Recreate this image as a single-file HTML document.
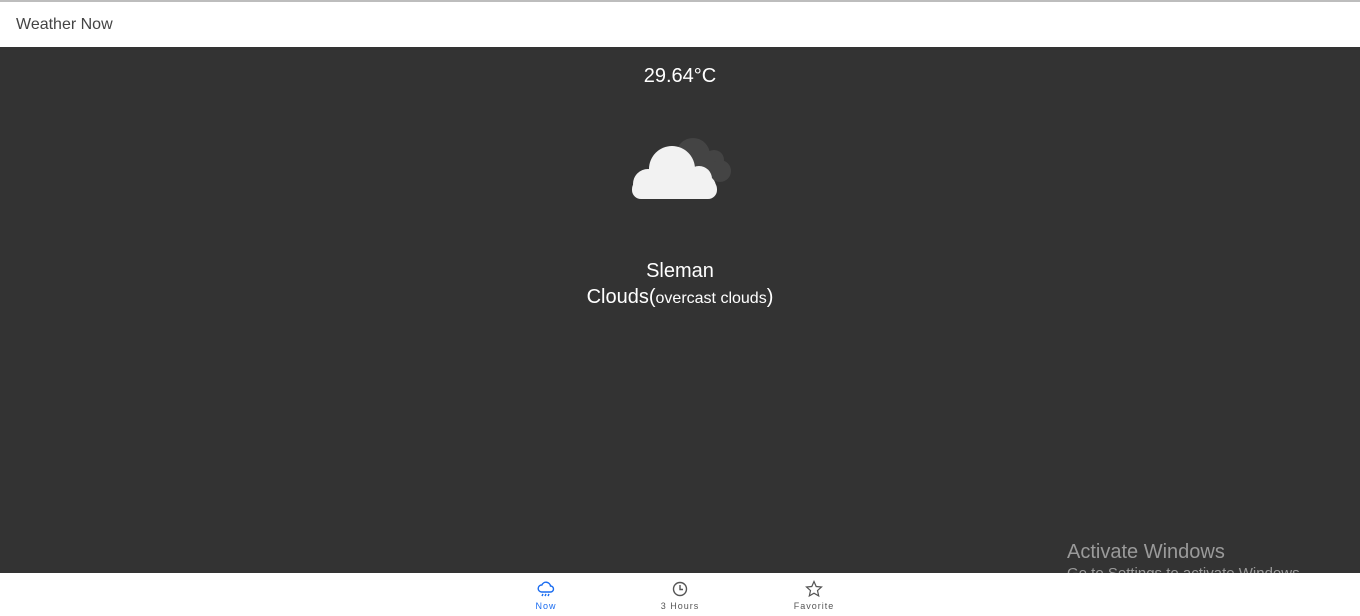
<!DOCTYPE html>
<html><head><style>
*{margin:0;padding:0;box-sizing:border-box}
body{width:1360px;height:616px;overflow:hidden;font-family:"Liberation Sans",sans-serif;background:#333;position:relative}
.top{position:absolute;left:0;top:0;width:1360px;height:47px;background:#fff;border-top:2px solid #bdbdbd}
.top span{position:absolute;left:16px;top:14px;font-size:16px;color:#444}
.t{position:absolute;color:#fff;text-align:center;width:1360px;left:0}
.nav{position:absolute;left:0;top:573px;width:1360px;height:43px;background:#fff}
.it{position:absolute;top:7px;width:80px;text-align:center;font-size:9px;letter-spacing:1px;color:#555}
.it svg{display:block;margin:0 auto 3px}
.aw{position:absolute;left:1067px;top:541px;color:#9a9a9a}
</style></head><body>
<div class="top"><span>Weather Now</span></div>
<div class="t" style="top:65px;font-size:20px">29.64°C</div>
<svg style="position:absolute;left:620px;top:128px" width="120" height="80" viewBox="620 128 120 80">
<g fill="#444">
<circle cx="693" cy="155" r="17"/><circle cx="714" cy="160" r="10"/><circle cx="720" cy="171" r="11"/><rect x="680" y="160" width="40" height="22" rx="10"/>
</g>
<g fill="#f2f2f2">
<circle cx="672" cy="169" r="23"/><circle cx="699" cy="179" r="13"/><circle cx="648" cy="184" r="15"/><circle cx="704" cy="187" r="12"/>
<rect x="632" y="180" width="85" height="19" rx="9"/>
</g>
</svg>
<div class="t" style="top:260px;font-size:20px">Sleman</div>
<div class="t" style="top:286px;font-size:20px">Clouds(<span style="font-size:16px">overcast clouds</span>)</div>
<div class="aw"><div style="font-size:20px">Activate Windows</div><div style="font-size:15px;margin-top:1px">Go to Settings to activate Windows.</div></div>
<div class="nav">
<div class="it" style="left:506px;color:#1a6cf0"><svg width="18" height="18" viewBox="0 0 18 18" fill="none" stroke="#1a6cf0" stroke-width="1.4"><path d="M4.5 12h9a3 3 0 0 0 0-6 4.5 4.5 0 0 0-8.6-1A3.5 3.5 0 0 0 4.5 12z"/><path d="M6 14l-1 2M9 14l-1 2M12 14l-1 2"/></svg>Now</div>
<div class="it" style="left:640px"><svg width="18" height="18" viewBox="0 0 18 18" fill="none" stroke="#555" stroke-width="1.4"><circle cx="9" cy="9" r="6.5"/><path d="M9 5v4.5h3"/></svg>3 Hours</div>
<div class="it" style="left:774px"><svg width="18" height="18" viewBox="0 0 18 18" fill="none" stroke="#555" stroke-width="1.2"><path d="M9 1.5l2.2 5 5.3.5-4 3.6 1.2 5.3L9 13.2 4.3 15.9l1.2-5.3-4-3.6 5.3-.5z"/></svg>Favorite</div>
</div>
</body></html>
